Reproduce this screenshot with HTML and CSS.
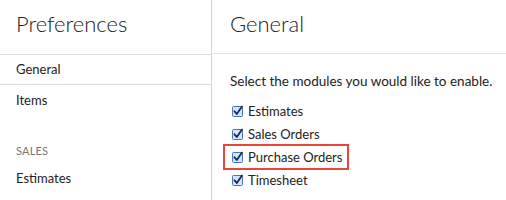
FILE: index.html
```html
<!DOCTYPE html>
<html lang="en">
<head>
<meta charset="UTF-8">
<title>Preferences</title>
<link rel="stylesheet" href="styles.css">
</head>
<body>
<div class="prefs">
  <!-- sidebar -->
  <aside class="side">
    <header class="side-head">Preferences</header>
    <a class="side-item active">General</a>
    <a class="side-item">Items</a>
    <div class="side-group">SALES</div>
    <a class="side-item">Estimates</a>
  </aside>
  <!-- main -->
  <main class="main">
    <header class="main-head">General</header>
    <div class="main-body">
      <p class="lead">Select the modules you would like to enable.</p>
      <ul class="modules">
        <li><span class="cb"><svg viewBox="0 0 12 12"><rect x="0.5" y="1.5" width="10" height="10" rx="1" fill="#d5e4fb" stroke="#4a73c0"/><path d="M2.5 6.3 L4.8 9 L10 1.6" fill="none" stroke="#172a55" stroke-width="1.8" stroke-linecap="round" stroke-linejoin="round"/></svg></span>Estimates</li>
        <li><span class="cb"><svg viewBox="0 0 12 12"><rect x="0.5" y="1.5" width="10" height="10" rx="1" fill="#d5e4fb" stroke="#4a73c0"/><path d="M2.5 6.3 L4.8 9 L10 1.6" fill="none" stroke="#172a55" stroke-width="1.8" stroke-linecap="round" stroke-linejoin="round"/></svg></span>Sales Orders</li>
        <li class="marked"><span class="cb"><svg viewBox="0 0 12 12"><rect x="0.5" y="1.5" width="10" height="10" rx="1" fill="#d5e4fb" stroke="#4a73c0"/><path d="M2.5 6.3 L4.8 9 L10 1.6" fill="none" stroke="#172a55" stroke-width="1.8" stroke-linecap="round" stroke-linejoin="round"/></svg></span>Purchase Orders</li>
        <li><span class="cb"><svg viewBox="0 0 12 12"><rect x="0.5" y="1.5" width="10" height="10" rx="1" fill="#d5e4fb" stroke="#4a73c0"/><path d="M2.5 6.3 L4.8 9 L10 1.6" fill="none" stroke="#172a55" stroke-width="1.8" stroke-linecap="round" stroke-linejoin="round"/></svg></span>Timesheet</li>
      </ul>
    </div>
  </main>
</div>
</body>
</html>
```

FILE: styles.css
```css
body {
  margin: 0;
  background: #fff;
  font-family: 'Lato', 'Liberation Sans', Arial, sans-serif;
  color: #222;
}
.prefs {
  display: flex;
  height: 200px;
  overflow: hidden;
}
.side {
  width: 211px;
  flex-shrink: 0;
  border-right: 1px solid #d4d4d4;
  display: flex;
  flex-direction: column;
}
.side-head {
  height: 55px;
  flex-shrink: 0;
  box-sizing: border-box;
  padding: 11px 16px 0;
  font-size: 22px;
  line-height: 26px;
  font-weight: 300;
  border-bottom: 1px solid #dcdcdc;
}
.side-item {
  display: block;
  padding: 0 16px;
  font-size: 13px;
  line-height: 30px;
  color: #222;
}
.side-item.active {
  line-height: 29px;
  border-bottom: 1px solid #dcdcdc;
}
.side-group {
  padding: 28px 16px 4px;
  font-size: 11px;
  line-height: 16px;
  color: #777;
  letter-spacing: 0.2px;
}
.main {
  flex: 1;
  min-width: 0;
}
.main-head {
  height: 54px;
  box-sizing: border-box;
  padding: 11px 18px 0;
  font-size: 22px;
  line-height: 26px;
  font-weight: 300;
  border-bottom: 1px solid #e2e2e2;
}
.main-body {
  padding: 17px 0 0 18px;
}
.lead {
  margin: 0 0 8px;
  font-size: 13.5px;
  line-height: 20px;
  white-space: nowrap;
}
.modules {
  list-style: none;
  margin: 0;
  padding: 0;
}
.modules li {
  display: flex;
  align-items: center;
  height: 23px;
  font-size: 13px;
  width: fit-content;
  padding: 0 2px;
}
.cb {
  width: 12px;
  height: 12px;
  margin-right: 4px;
  display: inline-flex;
}
.cb svg { width: 12px; height: 12px; }
.modules li.marked {
  height: 26px;
  box-sizing: border-box;
  border: 2px solid #e8463a;
  margin: -1px 0 -2px -7px;
  padding: 0 5px 0 7px;
}
```
